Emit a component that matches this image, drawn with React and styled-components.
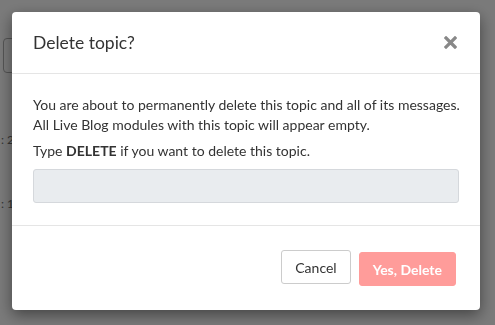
import React from 'react';
import styled, { createGlobalStyle } from 'styled-components';

const GlobalStyle = createGlobalStyle`
  html, body {
    margin: 0;
    padding: 0;
    width: 100%;
    height: 100%;
    background: #fff;
    font-family: Lato, "Liberation Sans", sans-serif;
    overflow: hidden;
  }
`;

const Page = styled.div`
  display: flex;
  flex-direction: column;
  align-items: flex-start;
  padding: 38px 0 0 3px;
`;

const Field = styled.div`
  box-sizing: border-box;
  width: 220px;
  height: 35px;
  border: 1px solid #b0b0b0;
  border-radius: 4px;
`;

const Stamp = styled.div`
  margin: ${(p) => p.$gap}px 0 0 -2px;
  font-size: 12px;
  line-height: 12px;
  color: #6e6e6e;
  white-space: nowrap;
`;

const Overlay = styled.div`
  position: fixed;
  inset: 0;
  background: rgba(0, 0, 0, 0.52);
  padding: 12px 15px 0 12px;
`;

const Modal = styled.div`
  width: 468px;
  background: #fff;
  border-radius: 4px;
  box-shadow: 0 5px 15px rgba(0, 0, 0, 0.45);
  color: #333;
`;

const Header = styled.div`
  display: flex;
  align-items: center;
  justify-content: space-between;
  padding: 20px 23px 20px 21px;
  border-bottom: 1px solid #e5e5e5;
`;

const Title = styled.h4`
  margin: 0;
  font-size: 17.5px;
  line-height: 21px;
  font-weight: 400;
  color: #333;
`;

const Close = styled.button`
  border: none;
  background: none;
  padding: 0;
  width: 13px;
  height: 13px;
  display: flex;
  cursor: pointer;
`;

const Body = styled.div`
  padding: 21px 21px 22px;
  font-size: 14px;
  line-height: 20px;
`;

const Text = styled.p`
  margin: 0 0 ${(p) => p.$space}px;
  white-space: nowrap;
`;

const Input = styled.input`
  display: block;
  box-sizing: border-box;
  width: 100%;
  height: 34px;
  background: #e9ecef;
  border: 1px solid #d5d8dc;
  border-radius: 3px;
`;

const Footer = styled.div`
  display: flex;
  justify-content: flex-end;
  align-items: flex-start;
  gap: 8px;
  padding: 24px 24px 24px;
  border-top: 1px solid #e5e5e5;
`;

const Button = styled.button`
  box-sizing: border-box;
  height: 34px;
  margin-top: ${(p) => (p.$danger ? 2 : 0)}px;
  padding: 0 13px;
  border-radius: 3px;
  font-family: Lato, "Liberation Sans", sans-serif;
  font-size: 14px;
  font-weight: ${(p) => (p.$danger ? 700 : 400)};
  color: ${(p) => (p.$danger ? '#fff' : '#333')};
  background: ${(p) => (p.$danger ? '#ff9c9a' : '#fff')};
  border: 1px solid ${(p) => (p.$danger ? '#ff9c9a' : '#ccc')};
  cursor: pointer;
`;

export default function App() {
  return (
    <>
      <GlobalStyle />
      <Page>
        <Field />
        <Stamp $gap={61}>: 2</Stamp>
        <Stamp $gap={52}>: 1</Stamp>
      </Page>
      <Overlay>
        <Modal>
          <Header>
            <Title>Delete topic?</Title>
            <Close aria-label="Close">
              <svg width="13" height="13" viewBox="0 0 13 13">
                <path d="M2 2L11 11M11 2L2 11" stroke="#888" strokeWidth="3.2" strokeLinecap="square" />
              </svg>
            </Close>
          </Header>
          <Body>
            <Text $space={6}>
              You are about to permanently delete this topic and all of its messages.
              <br />
              All Live Blog modules with this topic will appear empty.
            </Text>
            <Text $space={8}>
              Type <b>DELETE</b> if you want to delete this topic.
            </Text>
            <Input type="text" />
          </Body>
          <Footer>
            <Button>Cancel</Button>
            <Button $danger disabled>Yes, Delete</Button>
          </Footer>
        </Modal>
      </Overlay>
    </>
  );
}
